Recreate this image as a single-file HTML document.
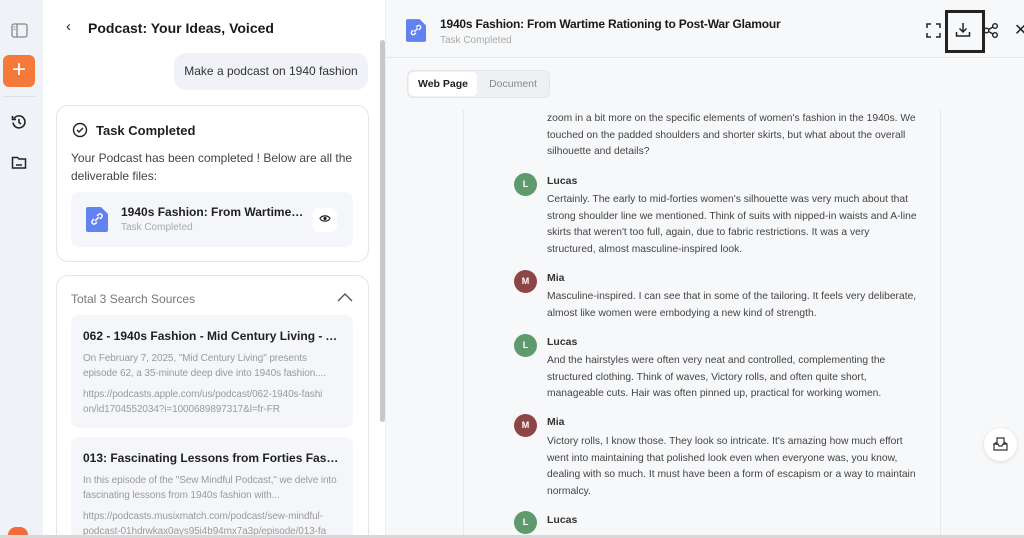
<!DOCTYPE html>
<html><head><meta charset="utf-8"><style>
*{box-sizing:border-box;margin:0;padding:0}
html{width:1024px;height:538px;overflow:hidden}
body{width:1024px;height:538px;overflow:hidden;font-family:"Liberation Sans",Arial,sans-serif;background:#f7f8fa;position:relative;color:#1f1f1f}
.abs{position:absolute}
.rail{left:0;top:0;width:43px;height:538px;background:#eff2f7}
.left{left:43px;top:0;width:342px;height:538px;background:#fff}
.right{left:385px;top:0;width:639px;height:538px;background:#f7f8fa;border-left:1px solid #eceef2}
.card{border:1px solid #e3e5ea;border-radius:12px;background:#fff}
.src{background:#f4f6fa;border-radius:8px;position:absolute;left:15px;width:282px;padding:0 12px;overflow:hidden}
.src h4{font-size:12px;font-weight:bold;color:#1f1f1f;margin-top:14px;white-space:nowrap;overflow:hidden;text-overflow:ellipsis}
.src p{font-size:10px;color:#9a9a9a;line-height:15px;margin-top:8px;letter-spacing:-0.1px}
.msg{position:absolute;left:547px;width:372px;font-size:10.3px;line-height:16.5px;color:#444}
.name{position:absolute;left:547px;font-size:10.5px;font-weight:bold;color:#333}
.av{position:absolute;left:514px;width:23px;height:23px;border-radius:50%;color:#fff;font-size:9px;font-weight:bold;text-align:center;line-height:23px}
.L{background:#5e9a6c}.M{background:#8e4545}
</style></head><body>
<div class="abs rail"></div>
<svg class="abs" style="left:11px;top:23px" width="17" height="15" viewBox="0 0 17 15"><rect x="1" y="1" width="15" height="13" rx="2" fill="none" stroke="#888" stroke-width="1.3"/><line x1="6" y1="1" x2="6" y2="14" stroke="#888" stroke-width="1.3"/><line x1="2.5" y1="4" x2="4.5" y2="4" stroke="#888"/><line x1="2.5" y1="6.5" x2="4.5" y2="6.5" stroke="#888"/></svg>
<div class="abs" style="left:3px;top:55px;width:32px;height:32px;border-radius:6px;background:#f5793a;color:#fff;font-size:24px;line-height:30px;text-align:center">+</div>
<div class="abs" style="left:3px;top:96px;width:32px;height:1px;background:#dcdfe4"></div>
<svg class="abs" style="left:11px;top:114px" width="16" height="16" viewBox="0 0 16 16"><path d="M3 4.5A6 6 0 1 1 2 8.5" fill="none" stroke="#222" stroke-width="1.6"/><path d="M1.5 2v3.5h3.5" fill="none" stroke="#222" stroke-width="1.6"/><path d="M8 5v3.5l2 1.5" fill="none" stroke="#222" stroke-width="1.6"/></svg>
<svg class="abs" style="left:11px;top:155px" width="16" height="15" viewBox="0 0 16 15"><path d="M1.5 2.5h5l1.5 1.5h6.5v9h-13z" fill="none" stroke="#222" stroke-width="1.5"/><line x1="5" y1="10" x2="11" y2="10" stroke="#222" stroke-width="1.5"/></svg>
<div class="abs" style="left:8px;top:527px;width:20px;height:8px;border-radius:10px 10px 0 0;background:#f26b3a"></div>

<div class="abs left"></div>
<div class="abs" style="left:66px;top:18px;font-size:15px">‹</div>
<div class="abs" style="left:88px;top:20px;font-size:14px;font-weight:bold;color:#1a1a1a">Podcast: Your Ideas, Voiced</div>
<div class="abs" style="left:174px;top:53px;width:194px;height:37px;background:#f0f2f7;border-radius:12px;font-size:12px;line-height:37px;text-align:center;color:#333">Make a podcast on 1940 fashion</div>
<div class="abs card" style="left:56px;top:105px;width:313px;height:157px"></div>
<svg class="abs" style="left:72px;top:122px" width="16" height="16" viewBox="0 0 16 16"><circle cx="8" cy="8" r="6.5" fill="none" stroke="#222" stroke-width="1.4"/><path d="M5 8l2 2 4-4" fill="none" stroke="#222" stroke-width="1.4"/></svg>
<div class="abs" style="left:96px;top:123px;font-size:13px;font-weight:bold">Task Completed</div>
<div class="abs" style="left:71px;top:149px;width:290px;font-size:12px;line-height:18px;color:#444">Your Podcast has been completed ! Below are all the deliverable files:</div>
<div class="abs" style="left:71px;top:192px;width:282px;height:55px;background:#f4f6fa;border-radius:8px"></div>
<svg class="abs" style="left:86px;top:207px" width="22" height="25" viewBox="0 0 22 25"><path d="M2 0h13l7 7v16a2 2 0 0 1-2 2H2a2 2 0 0 1-2-2V2a2 2 0 0 1 2-2z" fill="#6282f0"/><path d="M9 14l4-4M8 12l-1.5 1.5a2 2 0 0 0 3 3L11 15M14 12l1.5-1.5a2 2 0 0 0-3-3L11 9" stroke="#fff" stroke-width="1.5" fill="none"/></svg>
<div class="abs" style="left:121px;top:205px;width:185px;font-size:12px;font-weight:bold;white-space:nowrap;overflow:hidden;text-overflow:ellipsis">1940s Fashion: From Wartime Rationing</div>
<div class="abs" style="left:121px;top:222px;font-size:10px;color:#aaa">Task Completed</div>
<div class="abs" style="left:313px;top:208px;width:24px;height:24px;background:#fff;border-radius:6px;font-size:12px;text-align:center;line-height:22px">
<svg width="12" height="9" viewBox="0 0 12 9"><path d="M1 4.5C3 1 9 1 11 4.5 9 8 3 8 1 4.5z" fill="none" stroke="#222" stroke-width="1.2"/><circle cx="6" cy="4.5" r="1.6" fill="#222"/></svg></div>
<div class="abs" style="left:56px;top:275px;width:313px;height:260px;overflow:hidden">
<div class="abs card" style="left:0;top:0;width:313px;height:290px"></div>
<div class="abs" style="left:15px;top:17px;font-size:12px;color:#777">Total 3 Search Sources</div>
<svg class="abs" style="left:281px;top:18px" width="16" height="9" viewBox="0 0 16 9"><path d="M1 8l7-7 7 7" fill="none" stroke="#555" stroke-width="1.4"/></svg>
<div class="src" style="top:40px;height:113px"><h4>062 - 1940s Fashion - Mid Century Living - Apple Podcasts</h4><p>On February 7, 2025, "Mid Century Living" presents episode 62, a 35-minute deep dive into 1940s fashion....</p><p style="margin-top:6px">https://podcasts.apple.com/us/podcast/062-1940s-fashi on/id1704552034?i=1000689897317&amp;l=fr-FR</p></div>
<div class="src" style="top:162px;height:130px"><h4>013: Fascinating Lessons from Forties Fashion with</h4><p>In this episode of the "Sew Mindful Podcast," we delve into fascinating lessons from 1940s fashion with...</p><p style="margin-top:6px">https://podcasts.musixmatch.com/podcast/sew-mindful-podcast-01hdrwkax0ays95i4b94mx7a3p/episode/013-fa</p></div>
</div>
<div class="abs" style="left:380px;top:40px;width:5px;height:382px;background:#c8c8c8;border-radius:3px"></div>

<div class="abs right"></div>
<div class="abs" style="left:385px;top:57px;width:639px;height:1px;background:#e6e8ec"></div>
<svg class="abs" style="left:406px;top:17px" width="20" height="27" viewBox="0 0 22 25"><path d="M2 0h13l7 7v16a2 2 0 0 1-2 2H2a2 2 0 0 1-2-2V2a2 2 0 0 1 2-2z" fill="#6282f0"/><path d="M9 14l4-4M8 12l-1.5 1.5a2 2 0 0 0 3 3L11 15M14 12l1.5-1.5a2 2 0 0 0-3-3L11 9" stroke="#fff" stroke-width="1.5" fill="none"/></svg>
<div class="abs" style="left:440px;top:17px;font-size:12px;font-weight:bold;color:#1a1a1a;letter-spacing:-0.2px">1940s Fashion: From Wartime Rationing to Post-War Glamour</div>
<div class="abs" style="left:440px;top:35px;font-size:10px;color:#aaa">Task Completed</div>
<svg class="abs" style="left:926px;top:23px" width="15" height="15" viewBox="0 0 15 15"><path d="M1 5V1h4M10 1h4v4M14 10v4h-4M5 14H1v-4" fill="none" stroke="#222" stroke-width="1.5"/></svg>
<div class="abs" style="left:945px;top:10px;width:40px;height:43px;border:3px solid #222"></div>
<svg class="abs" style="left:955px;top:22px" width="16" height="16" viewBox="0 0 16 16"><path d="M8 1v9M4.5 6.5L8 10l3.5-3.5M1.5 10v4h13v-4" fill="none" stroke="#222" stroke-width="1.5"/></svg>
<svg class="abs" style="left:983px;top:23px" width="16" height="15" viewBox="0 0 16 15"><circle cx="3.5" cy="7.5" r="2.3" fill="none" stroke="#222" stroke-width="1.4"/><circle cx="12" cy="3" r="2.3" fill="none" stroke="#222" stroke-width="1.4"/><circle cx="12" cy="12" r="2.3" fill="none" stroke="#222" stroke-width="1.4"/><path d="M5.5 6.5l4.5-2.5M5.5 8.5l4.5 2.5" stroke="#222" stroke-width="1.4"/></svg>
<div class="abs" style="left:1014px;top:20px;font-size:16px;color:#222">✕</div>
<div class="abs" style="left:407px;top:70px;width:143px;height:28px;background:#eef0f4;border:1px solid #e3e5ea;border-radius:6px"></div>
<div class="abs" style="left:409px;top:72px;width:68px;height:24px;background:#fff;border-radius:5px;font-size:10.5px;font-weight:bold;text-align:center;line-height:24px">Web Page</div>
<div class="abs" style="left:477px;top:72px;width:72px;height:24px;font-size:10.5px;color:#888;text-align:center;line-height:24px">Document</div>
<div class="abs" style="left:463px;top:110px;width:1px;height:425px;background:#e6e8ec"></div>
<div class="abs" style="left:940px;top:110px;width:1px;height:425px;background:#e6e8ec"></div>

<div class="msg" style="top:111px">zoom in a bit more on the specific elements of women's fashion in the 1940s. We touched on the padded shoulders and shorter skirts, but what about the overall silhouette and details?</div>
<div class="av L" style="top:173px">L</div><div class="name" style="top:175px">Lucas</div>
<div class="msg" style="top:192px">Certainly. The early to mid-forties women's silhouette was very much about that strong shoulder line we mentioned. Think of suits with nipped-in waists and A-line skirts that weren't too full, again, due to fabric restrictions. It was a very structured, almost masculine-inspired look.</div>
<div class="av M" style="top:270px">M</div><div class="name" style="top:272px">Mia</div>
<div class="msg" style="top:289px">Masculine-inspired. I can see that in some of the tailoring. It feels very deliberate, almost like women were embodying a new kind of strength.</div>
<div class="av L" style="top:334px">L</div><div class="name" style="top:336px">Lucas</div>
<div class="msg" style="top:353px">And the hairstyles were often very neat and controlled, complementing the structured clothing. Think of waves, Victory rolls, and often quite short, manageable cuts. Hair was often pinned up, practical for working women.</div>
<div class="av M" style="top:414px">M</div><div class="name" style="top:416px">Mia</div>
<div class="msg" style="top:434px">Victory rolls, I know those. They look so intricate. It's amazing how much effort went into maintaining that polished look even when everyone was, you know, dealing with so much. It must have been a form of escapism or a way to maintain normalcy.</div>
<div class="av L" style="top:511px">L</div><div class="name" style="top:514px">Lucas</div>
<div class="abs" style="left:984px;top:428px;width:33px;height:33px;border-radius:50%;background:#fff;box-shadow:0 1px 4px rgba(0,0,0,.12)"></div>
<svg class="abs" style="left:993px;top:437px" width="15" height="14" viewBox="0 0 15 14"><path d="M1 7v6h13V7l-3-2M4 5L1 7h4l1 2h3l1-2h4M4 8V1h7v7" fill="none" stroke="#333" stroke-width="1.2"/></svg>
<div class="abs" style="left:0;top:535px;width:1024px;height:3px;background:#d8d8d8"></div>
</body></html>
